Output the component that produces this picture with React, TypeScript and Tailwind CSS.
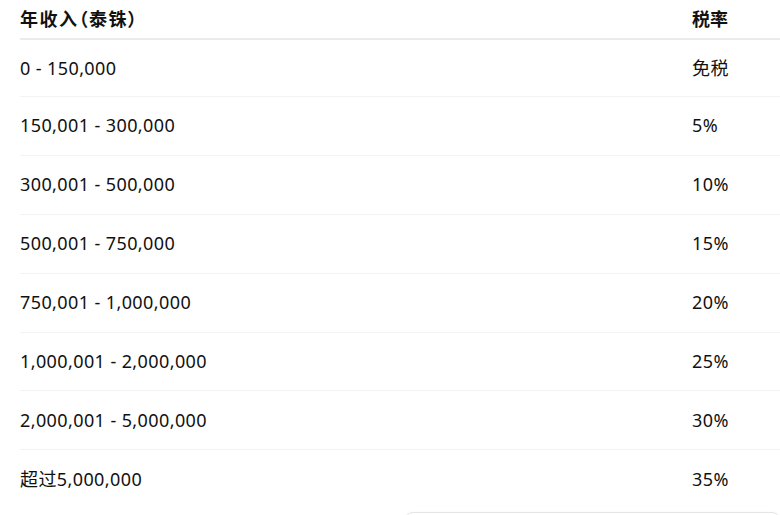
const rows: [string, string][] = [
  ["0 - 150,000", "免税"],
  ["150,001 - 300,000", "5%"],
  ["300,001 - 500,000", "10%"],
  ["500,001 - 750,000", "15%"],
  ["750,001 - 1,000,000", "20%"],
  ["1,000,001 - 2,000,000", "25%"],
  ["2,000,001 - 5,000,000", "30%"],
  ["超过5,000,000", "35%"],
];

export default function App() {
  return (
    <div className="w-[780px] h-[515px] overflow-hidden bg-white pl-5 font-['Noto_Sans','Noto_Sans_CJK_SC',sans-serif] text-[18px] text-[#111]">
      <div className="grid grid-cols-[672px_1fr] h-[40px] items-center border-b-2 border-[#ebebeb] font-bold">
        <div className="[font-feature-settings:'palt'] tracking-[1.5px]">年收入（泰铢）</div>
        <div>税率</div>
      </div>

      {rows.map(([income, rate], i) => (
        <div
          key={income}
          className={`grid grid-cols-[672px_1fr] items-center tracking-[0.4px] ${
            i === 0 ? "h-[57px]" : "h-[58.9px]"
          } ${i < rows.length - 1 ? "border-b border-[#f3f3f3]" : ""}`}
        >
          <div>{income}</div>
          <div>{rate}</div>
        </div>
      ))}

      {/* card below the table */}
      <div className="ml-[385px] mt-[3px] h-[40px] rounded-lg border border-[#e4e4e4] shadow-sm" />
    </div>
  );
}
